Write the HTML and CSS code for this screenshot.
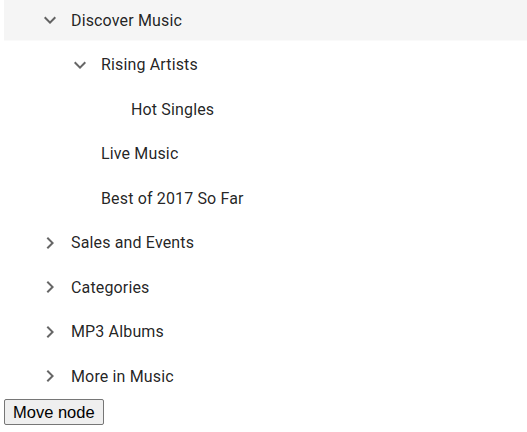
FILE: index.html
```html
<!DOCTYPE html>
<html>
<head>
<meta charset="utf-8">
<link rel="stylesheet" href="styles.css">
</head>
<body>
<div class="tree">
  <div class="node active level-0">
    <span class="toggle"><svg viewBox="0 0 24 24"><path d="M16.59 8.59L12 13.17 7.41 8.59 6 10l6 6 6-6z"/></svg></span>
    <span class="label">Discover Music</span>
  </div>
  <div class="node level-1">
    <span class="toggle"><svg viewBox="0 0 24 24"><path d="M16.59 8.59L12 13.17 7.41 8.59 6 10l6 6 6-6z"/></svg></span>
    <span class="label">Rising Artists</span>
  </div>
  <div class="node level-2">
    <span class="toggle"></span>
    <span class="label">Hot Singles</span>
  </div>
  <div class="node level-1">
    <span class="toggle"></span>
    <span class="label">Live Music</span>
  </div>
  <div class="node level-1">
    <span class="toggle"></span>
    <span class="label">Best of 2017 So Far</span>
  </div>
  <div class="node level-0">
    <span class="toggle"><svg viewBox="0 0 24 24"><path d="M10 6L8.59 7.41 13.17 12l-4.58 4.59L10 18l6-6z"/></svg></span>
    <span class="label">Sales and Events</span>
  </div>
  <div class="node level-0">
    <span class="toggle"><svg viewBox="0 0 24 24"><path d="M10 6L8.59 7.41 13.17 12l-4.58 4.59L10 18l6-6z"/></svg></span>
    <span class="label">Categories</span>
  </div>
  <div class="node level-0">
    <span class="toggle"><svg viewBox="0 0 24 24"><path d="M10 6L8.59 7.41 13.17 12l-4.58 4.59L10 18l6-6z"/></svg></span>
    <span class="label">MP3 Albums</span>
  </div>
  <div class="node level-0">
    <span class="toggle"><svg viewBox="0 0 24 24"><path d="M10 6L8.59 7.41 13.17 12l-4.58 4.59L10 18l6-6z"/></svg></span>
    <span class="label">More in Music</span>
  </div>
</div>
<button class="move-btn">Move node</button>
</body>
</html>
```
FILE: styles.css
```css
html, body {
  margin: 0;
  padding: 0;
  background: #fff;
}
body {
  padding-left: 4px;
  font-family: Roboto, "Liberation Sans", sans-serif;
}
.tree {
  margin-top: -2.25px;
}
.node {
  display: flex;
  align-items: center;
  height: 44.5px;
  font-size: 16px;
  letter-spacing: 0.15px;
  color: rgba(0, 0, 0, 0.87);
}
.node.active {
  background: linear-gradient(#f5f5f5, #f5f5f5) top left / 100% 42.5px no-repeat;
}
.level-0 { padding-left: 26px; }
.level-1 { padding-left: 56px; }
.level-2 { padding-left: 86px; }
.toggle {
  width: 40px;
  height: 40px;
  display: flex;
  align-items: center;
  justify-content: center;
  flex: none;
}
.toggle svg {
  width: 24px;
  height: 24px;
  fill: rgba(0, 0, 0, 0.6);
}
.label {
  margin-left: 1px;
}
.move-btn {
  display: block;
  font-family: "Liberation Sans", Arial, sans-serif;
  font-size: 16.5px;
  line-height: 18px;
  padding: 3px 8px 3px 8px;
  margin: 1px 0 0 0;
  color: #000;
  background: #efefef;
  border: 1px solid #767676;
  border-radius: 2px;
}
```
